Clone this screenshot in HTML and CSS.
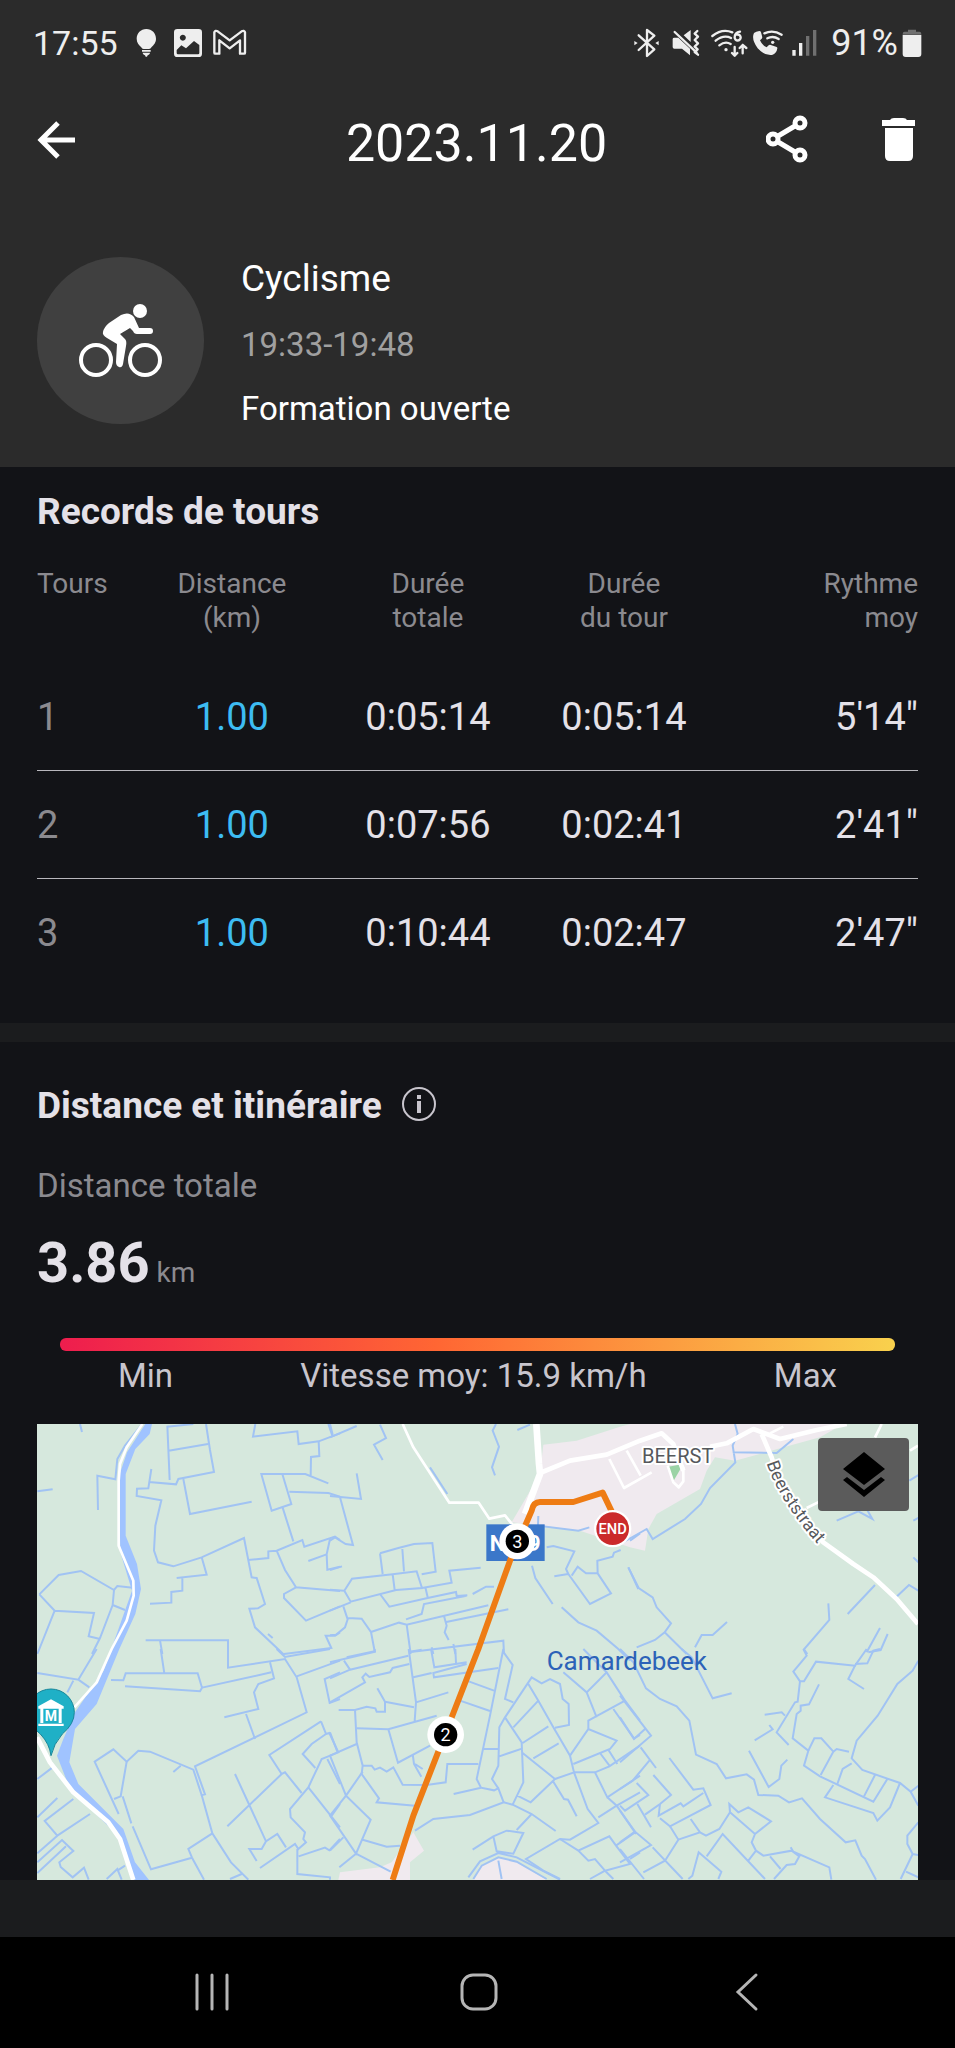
FILE: index.html
```
<!doctype html>
<html lang="fr">
<head>
    <meta charset="UTF-8">
    <meta name="viewport" content="width=device-width, initial-scale=1.0">
    <title>Cyclisme - 2023.11.20</title>
    <link rel="stylesheet" href="styles.css">
</head>
<body>
    <header class="top">
        <!-- Status bar -->
        <div class="status-bar">
            <div class="status-left">
                <span>17:55</span>
                <svg width="47" height="30" viewBox="354 84 141 90">
                    <path d="M439 87c-17 0-29 13-29 29 0 12 7 19 13 25 3 3 4 6 8 6h16c4 0 5-3 8-6 6-6 13-13 13-25 0-16-12-29-29-29zM426 150h26v5h-26zM428 158h22c0 5-5 7-7 8l-2 4h-4l-2-4c-2-1-7-3-7-8z"/>
                </svg>
                <svg width="43" height="30" viewBox="495 84 129 90">
                    <path fill-rule="evenodd" d="M532 87h64q10 0 10 10v64q0 10-10 10h-64q-10 0-10-10V97q0-10 10-10zM548 104a9 9 0 1 0 1 0zM530 150v9q0 4 4 4h60q4 0 4-4v-24l-16-12-24 22-14-9z"/>
                </svg>
                <svg width="40" height="30" viewBox="624 84 120 90">
                    <path class="outline" d="M643 97q3-7 10-3l36 27 36-27q7-4 10 3v61q0 3-3 3h-12v-40l-31 24-31-24v40h-12q-3 0-3-3z"/>
                </svg>
            </div>
            <div class="status-right">
                <svg width="34" height="30" viewBox="475 84 102 90">
                    <path class="outline" d="M492 106l47 42-22 20V90l22 17-47 43"/>
                    <path d="M479 123l10 6-10 7zM552 123l-10 6 10 7z"/>
                </svg>
                <svg width="40" height="30" viewBox="577 84 120 90">
                    <path d="M594 117q0-4 5-4h12l35 33v20l-24-20h-23q-5 0-5-5zM627 106l21-16v36z"/>
                    <path class="outline" d="M600 96l66 62M668 93l-8 8 10 9-10 10 10 10-10 10 9 8-9 8 10 8"/>
                </svg>
                <svg width="44" height="30" viewBox="697 84 132 90">
                    <path class="outline" d="M713 108q30-24 60-11M723 122q24-19 46-8M734 136q18-14 34-4M796 95q-16 3-16 17a9 9 0 1 0 6-8M780 141v26l-8-8m8 8l8-8M804 160v-25l-9 9m9-9l11 9"/>
                    <circle cx="754" cy="149" r="5"/>
                </svg>
                <svg width="36" height="30" viewBox="829 84 108 90">
                    <path d="M845 95l9-2q4 0 5 4l4 15q0 4-7 9 6 15 20 21 6-9 10-8l18 6q5 1 4 5-2 16-16 20-22 3-43-20-20-28-11-46z"/>
                    <path class="outline" d="M869 100q26-12 52 4M878 115q17-9 34 2"/>
                    <circle cx="894" cy="127" r="5"/>
                </svg>
                <svg width="44" height="30" viewBox="937 84 132 90">
                    <path d="M953 150h10v17h-10zM973 129h10v38h-10z"/>
                    <path class="faint" d="M994 108h10v59h-10zM1015 90h10v77h-10z"/>
                </svg>
                <span class="battery-level">91%</span>
                <svg width="24" height="30" viewBox="1272 84 72 90">
                    <path class="faint" d="M1302 89h24v6h10q6 0 6 7h-56q0-7 6-7h10z"/>
                    <path d="M1286 104h56v58q0 9-9 9h-38q-9 0-9-9z"/>
                </svg>
            </div>
        </div>

        <!-- App bar -->
        <div class="app-bar">
            <button class="icon-btn" aria-label="Retour">
                <svg width="38" height="60" viewBox="0 0 38 60">
                    <path class="line" d="M38 26H4M21 9L4 26l17 17"/>
                </svg>
            </button>
            <h1>2023.11.20</h1>
            <div class="actions">
                <button class="icon-btn" aria-label="Partager">
                    <svg width="42" height="60" viewBox="0 0 42 60">
                        <path class="line" d="M34 9L7 25l27 16"/>
                        <g class="ring">
                            <circle cx="34" cy="9" r="5"/>
                            <circle cx="7" cy="25" r="5"/>
                            <circle cx="34" cy="41" r="5"/>
                        </g>
                    </svg>
                </button>
                <button class="icon-btn" aria-label="Supprimer">
                    <svg width="34" height="60" viewBox="0 0 34 60">
                        <path d="M0 6h8q1-2 4-2h9q3 0 4 2h8v6H0zM3 14h28v28q0 5-5 5H8q-5 0-5-5z"/>
                    </svg>
                </button>
            </div>
        </div>

        <div class="activity">
            <div class="avatar">
                <svg width="84" height="80" viewBox="0 0 84 80">
                    <circle class="wheel" cx="17" cy="59" r="15"/>
                    <circle class="wheel" cx="66" cy="59" r="15"/>
                    <circle cx="61" cy="10" r="7"/>
                    <path d="M24 31q1-5 6-9l12-8q8-4 13 2l5 11h11q3 0 3 3t-3 3H58q-3 0-4-3l-3-3-10 6 5 5q2 2 1 7l-3 18q-1 4-4 3t-3-5l1-18-10-6q-5-3-4-6z"/>
                </svg>
            </div>
            <div class="activity-text">
                <p class="sport">Cyclisme</p>
                <p class="hours">19:33-19:48</p>
                <p>Formation ouverte</p>
            </div>
        </div>
    </header>

    <main>
        <section class="laps">
            <h2>Records de tours</h2>
            <table>
                <thead>
                    <tr>
                        <th>Tours</th>
                        <th>Distance<br>(km)</th>
                        <th>Durée<br>totale</th>
                        <th>Durée<br>du tour</th>
                        <th>Rythme<br>moy</th>
                    </tr>
                </thead>
                <tbody>
                    <tr><td>1</td><td>1.00</td><td>0:05:14</td><td>0:05:14</td><td>5'14"</td></tr>
                    <tr><td>2</td><td>1.00</td><td>0:07:56</td><td>0:02:41</td><td>2'41"</td></tr>
                    <tr><td>3</td><td>1.00</td><td>0:10:44</td><td>0:02:47</td><td>2'47"</td></tr>
                </tbody>
            </table>
        </section>

        <section class="route">
            <div class="route-title">
                <h2>Distance et itinéraire</h2>
                <button class="icon-btn" aria-label="Informations">
                    <svg width="36" height="44" viewBox="0 0 36 44">
                        <circle class="info-ring" cx="18" cy="20" r="16"/>
                        <path class="info-mark" d="M16 11h4v4h-4zM16 17h4v12h-4z"/>
                    </svg>
                </button>
            </div>
            <p class="label">Distance totale</p>
            <p class="total"><strong>3.86</strong> km</p>

            <div class="speed">
                <div class="speed-bar"></div>
                <div class="speed-labels">
                    <span>Min</span>
                    <span>Vitesse moy: 15.9 km/h</span>
                    <span>Max</span>
                </div>
            </div>

            <!-- Map -->
            <div class="map">
                <svg class="map-drawing" viewBox="0 0 2643 1368" role="img" aria-label="Itinéraire">
                    <rect class="land" width="2643" height="1368"/>

                    <!-- Built-up areas -->
                    <g class="town">
                        <path d="M1519 62L1619 50L1749 8L1780 0H2419L2349 40L2149 95L2094 110L2034 100L2009 140L1989 195L1859 270L1834 315L1824 380L1779 370L1629 320L1519 305L1424 295L1509 150z"/>
                        <path d="M909 1345L1029 1330L1064 1315L1129 1225L1161 1280L1119 1315V1368H904z"/>
                        <path d="M1309 1368L1329 1325L1384 1300L1439 1315L1529 1368z"/>
                    </g>
                    <path class="park" d="M1894 128L1939 120L1909 172z"/>

                    <!-- Ditches -->
                    <g class="canal" transform="translate(-21 -30)">
                        <path d="M150 30L156 54M22 232L68 226M204 288L202 185L256 196L262 135L285 95L335 32"/>
                        <path d="M412 38L490 30M412 35L419 198M416 110L534 90M528 30L540 108L552 174L445 195L438 211L357 204M364 165L355 223L321 224L320 246L394 259L376 335L372 410L384 445L430 457L515 430L642 372L665 490L680 492L705 570L684 583L658 584L675 640L762 722"/>
                        <path d="M460 195L480 300L665 263M515 430L530 482L440 492M457 492V530L424 534V566L360 569"/>
                        <path d="M676 30L669 68L802 52L806 90L866 82L930 58M895 30L908 68M866 82L868 126L843 129L842 188M895 208L826 180H694L725 290L784 270L757 180M778 233L895 237L930 248"/>
                        <path d="M757 278L790 382M654 438L715 432V412L740 410L817 378L823 398L915 368L930 378M740 410L765 468L798 520L930 531M798 520L762 540V552L828 620L930 577M835 441L890 421L900 375M890 421L892 467L930 458"/>
                        <path d="M28 541L86 483L153 471L252 528L262 516L315 522M252 528L248 573L285 588M248 573L210 672L186 720M28 541L74 590L192 597L176 667L210 675M74 590L22 720"/>
                        <path d="M347 679H594V722M390 679L397 720M930 655L915 665L887 665L904 702L762 720M714 660L728 672"/>
                    </g>
                    <g class="canal" transform="translate(879 -30)">
                        <path d="M0 70L80 36M0 30L8 62M150 32L168 72L132 92L158 138M498 30L488 50L507 98L486 160L495 184M562 48L600 32M80 178L93 255L0 246M30 250L69 393L47 390L15 370L0 380M0 468L36 457"/>
                        <path d="M150 418L205 402L252 390L307 387L317 473L275 481M150 418L158 480M217 405L222 472M0 527L43 530L66 494L188 481L260 472L276 522L198 528L62 563L43 530M188 481L194 528M276 522L365 506L358 470L452 461M286 520L293 550M0 590L62 565"/>
                        <path d="M150 540L178 578L293 552L378 534L380 546L412 544M428 540L468 518L492 518M40 577L53 616L45 640L18 662L0 664M53 612L95 614L123 654L207 626L230 632L475 574M228 616L275 600L282 570L410 545M123 654L134 712L50 730M230 632L242 720M535 586L345 625M342 606L350 635L344 655L356 678M242 714L520 680L522 720M305 700L310 720M370 690L376 720"/>
                        <path d="M625 306L624 335L745 350L778 340M300 160L352 240M650 400L670 396L733 412L708 465L715 480L673 487M715 480L780 570L843 538L803 478L768 478L743 458L725 485M803 478L802 440L848 428L852 416L872 408M895 460L925 525M900 380L930 358"/>
                        <path d="M606 455L616 492L668 570M695 580L745 625L800 650L865 705L900 740"/>
                    </g>
                    <g class="canal" transform="translate(1749 -30)">
                        <path d="M345 30L353 60L338 95L346 145L270 222L243 270L195 315L98 375L80 345L0 390M338 115L470 117L520 75M650 320L715 292L757 315L740 285M868 200L895 183M880 430L895 445M880 320L895 312"/>
                        <path d="M25 460L56 522L98 550L110 580L153 628L134 655L105 678L50 700M134 655L200 720M225 700L245 663L278 663L321 624M625 568L628 618L552 706L562 720M683 600L765 513M828 550L867 513L895 530M780 642L740 715M803 660L782 708L745 715"/>
                    </g>
                    <g class="canal" transform="translate(-21 675)">
                        <path d="M200 0L145 92L22 72M145 92L178 115M130 95L112 130M243 93L280 94L287 73H503L516 116L724 70M285 112L510 127L516 116M392 0L403 73M594 0V56L765 30L800 85L830 190L495 352L525 436L515 438L490 362L360 308L325 305L290 338L250 301L194 338L266 495M430 369L452 350"/>
                        <path d="M290 338L272 442L252 450M278 442L304 523M308 532L363 661L486 626L522 692M515 438L547 553L603 640L655 692M547 553L475 600L486 626M600 690L635 675"/>
                        <path d="M740 0L765 24L900 0M720 40L732 88L685 105L672 130L685 180L583 205M648 195L675 270M800 82L930 35M930 70L884 90L899 162L930 150M873 217L718 318L755 375L765 370L815 432M873 217L888 255L845 285L818 315L856 357M888 255L898 252L925 310L875 330L835 415L780 480L782 505L825 550L820 570L828 580L805 600L795 585L690 657"/>
                        <path d="M755 375L592 532M615 375L658 468L708 577L742 555L768 595M708 577L695 600L658 600L680 636M835 415L930 535M892 330L930 405M905 500L930 465M802 600V675L900 685V692M806 622L885 596L898 604L930 570"/>
                        <path d="M22 390L68 355M22 505L82 447M130 450L44 516L82 560L180 495M82 560L22 613M22 640L96 573L130 606L88 640L92 654L128 685L162 656L176 692M22 672L108 592M230 690L262 660L275 692M262 665L285 650"/>
                    </g>
                    <g class="canal" transform="translate(879 675)">
                        <path d="M0 40L135 8L134 0M0 88L60 62L235 20M42 35L60 62M0 160L105 100L97 85L107 74L118 84L180 70L188 57L238 45M26 183H75L110 173L136 178L140 188H165V158L142 118M165 158L252 175M75 183L80 280L98 350L95 375L147 448L140 460L255 470"/>
                        <path d="M236 0L258 160L254 216M240 8L275 2M250 85L305 72M303 0L313 55L410 40M376 0L378 42M410 45L310 72L312 85L505 57M258 160L355 130M410 95L492 125M390 155L480 186M80 238L175 241L320 200M175 241L204 341L300 290M248 315L252 345L274 383M255 345L278 360"/>
                        <path d="M0 320L80 285M0 250L22 308M98 350H125L134 362L150 356L170 368L190 355L218 407L290 408L347 400L352 345H445M520 0L480 200L440 390L453 416L492 424L505 418L521 460M371 435L453 416M521 10L548 48L525 150L550 160M458 300H505"/>
                        <path d="M0 320L48 440L122 512L78 614L0 500L48 440L98 368M78 614L182 668M98 572L170 593L210 590M0 605L40 565M28 655L78 614M255 545L310 510L420 498L521 460L548 467L605 495L677 546M605 495L560 543M428 602L490 562L530 545L580 552L550 614L500 607L490 562M415 685L450 637L505 612L560 625L690 692M430 690L455 650L505 625L560 638L650 690M505 635L515 690"/>
                        <path d="M525 205L508 235L505 350L486 390L505 418M525 205L605 85L635 103L660 90L690 105L698 150L716 165L717 228L675 236M525 205L575 280L580 400L548 467M595 105L625 155L670 235L720 320L732 370L675 390L575 310M550 235L625 155M578 282L655 232M610 328L686 283M508 322L578 298M675 390L602 460L562 440M670 398L702 450L714 452L740 502"/>
                        <path d="M732 370L773 480L805 522L720 572L690 570L588 630L640 665L690 690M732 370H795L838 352L930 290M720 320L775 240L860 275L840 300L730 345M700 70L770 130L830 70L885 155L775 215V240M770 130L800 205M850 180L912 268L930 258M830 70L760 0M885 155L930 215M810 312L840 352M835 302L862 345"/>
                        <path d="M795 370L832 445L930 380M832 445L860 470L805 505M860 470L918 555M860 470L930 430M918 548L858 590L838 562L745 605L775 635L795 630L825 665L780 690M858 590L900 645L825 665L850 690M900 630L930 610M690 570L745 605"/>
                    </g>
                    <g class="canal" transform="translate(1749 675)">
                        <path d="M0 0L40 40L78 118L120 150L170 172L208 215L228 317L290 345L318 388L380 376L402 392L415 438L475 440L507 460L546 448L600 510L677 580L706 574L725 620L735 630L768 692"/>
                        <path d="M185 0L215 25L278 148L335 133M0 140L93 260L0 340M0 205L42 270L75 240M62 295L108 357M88 335L38 395L0 420M50 402L85 438L15 485L0 470M52 465L93 535M75 497L120 465L153 438L100 378M120 465L116 500L182 463L190 472L250 432M148 327L220 422L250 418L272 468L150 532L120 508"/>
                        <path d="M150 532L175 572L240 550L258 560L298 540L330 490L328 465L355 490L385 475L453 517L405 555L330 490M212 510L240 550M0 485L45 548L93 588L0 640M45 548L0 580M0 600L72 690M98 595L188 690M175 572L135 635L70 670M205 690L217 680L236 610L304 668L295 690M260 622L308 555L435 690M405 555L395 580L408 605L385 635M408 605L430 620L515 605L538 622L525 645L500 648L462 690M450 622L482 660M512 595L520 608L628 655L634 692"/>
                        <path d="M550 0L560 20L520 68L540 97L533 158L525 160L470 250L506 288M540 97H552L588 38L705 50L740 0M434 197L485 190L495 200M404 274L458 241L448 228M387 305L446 414L478 390L484 350L502 332M597 106L567 166L542 170V185L530 195L518 268L565 305L552 350L600 382L760 458L802 390"/>
                        <path d="M565 305L583 268H604L640 308L602 378M640 308L650 300L687 308M652 405L668 360L695 343M895 35L878 65L832 105L773 200L710 275L695 328L727 363L840 402L872 428L895 470M872 428L895 410M765 378L732 442M640 408L615 445L760 492L772 515L810 475L840 402M705 50L685 90L732 120M705 45L742 43L760 5L780 0M895 520L862 560V585L878 615L895 618M878 615L842 690M858 668L895 685"/>
                    </g>

                    <!-- River and roads -->
                    <path class="river" d="M325 0H345L338 30L295 75L266 150V335L300 420L312 495L295 570L247 675L179 840L114 915L97 1015L124 1080L259 1215L294 1315L336 1368H289L244 1235L99 1095L60 995L79 945L114 865L200 740L285 500L250 385L245 160L270 85z"/>
                    <g class="road">
                        <path class="w8" d="M316 0L269 70L249 120L245 170V365L289 470L290 515L269 590L224 675L179 775L112 850"/>
                        <path class="w14" d="M0 940L39 1015L109 1105L214 1195L249 1245L289 1368"/>
                        <path class="w8" d="M1097 0L1129 70L1237 236H1325L1357 284L1404 274L1429 305"/>
                        <path class="w20" d="M1498 0L1506 120L1509 150L1464 270"/>
                        <path class="w14" d="M1509 147L1599 110L1709 92L1809 50L1874 28L1909 60L1939 140"/>
                        <path class="w8" d="M1939 130L1939 172L1925 190L1909 175L1892 125M1717 105L1761 192L1844 145M1769 80L1811 155"/>
                        <path class="w14" d="M2019 68L2069 58L2149 15L2229 45L2339 18L2429 0"/>
                        <path class="w14" d="M2174 30L2204 100L2239 210L2289 280L2359 355L2449 420L2509 460L2579 525L2643 600"/>
                        <path class="w8" d="M2199 28L2239 8M2514 40L2534 0M2619 80L2643 65M2309 252L2349 232"/>
                    </g>

                    <!-- Places -->
                    <text class="place" x="1815" y="118">BEERST</text>
                    <text class="water-name" x="1529" y="738">Camardebeek</text>
                    <path id="street" class="hidden-path" d="M2189 118Q2225 232 2362 384"/>
                    <text class="street-name"><textPath href="#street">Beerststraat</textPath></text>

                    <!-- Museum pin -->
                    <path class="pin" d="M42 995Q38 960 10 930Q-28 900-28 865A70 70 0 0 1 112 865Q112 900 76 930Q50 960 42 995z"/>
                    <path class="pin-icon" d="M42 826L80 847V854H4V847zM10 854H19V897H10zM65 854H74V897H65zM4 899H80V906H4z"/>
                    <text class="pin-letter" x="42" y="891">M</text>

                    <!-- Track -->
                    <rect class="road-badge" x="1348" y="301" width="175" height="110"/>
                    <text class="road-number" x="1358" y="382">N</text>
                    <text class="road-number" x="1473" y="382">9</text>
                    <path class="track" d="M1067 1368L1129 1175L1324 675L1419 410L1484 260Q1489 234 1509 234H1609L1697 206L1724 262"/>
                    <g class="marker">
                        <circle class="ring-white" cx="1441" cy="352" r="54"/>
                        <circle cx="1441" cy="352" r="35"/>
                        <text x="1441" y="371">3</text>
                        <circle class="ring-white" cx="1226" cy="932" r="55"/>
                        <circle cx="1226" cy="932" r="35"/>
                        <text x="1226" y="951">2</text>
                        <circle class="ring-white" cx="1727" cy="314" r="56"/>
                        <circle class="end" cx="1727" cy="314" r="49"/>
                        <text class="end-text" x="1727" y="331">END</text>
                    </g>
                </svg>
                <button class="layers-btn" aria-label="Calques">
                    <svg width="42" height="46" viewBox="0 0 42 46">
                        <path d="M21 0l21 17-21 16L0 17zM4 25l17 13 17-13 4 3-21 17L0 28z"/>
                    </svg>
                </button>
            </div>
        </section>
    </main>

    <!-- Android navigation -->
    <nav class="nav-bar">
        <button class="icon-btn" aria-label="Applications récentes">
            <svg width="40" height="40" viewBox="0 0 40 40"><path d="M5 3v34M20 3v34M35 3v34"/></svg>
        </button>
        <button class="icon-btn" aria-label="Accueil">
            <svg width="40" height="40" viewBox="0 0 40 40"><rect x="4" y="3" width="34" height="34" rx="11"/></svg>
        </button>
        <button class="icon-btn" aria-label="Précédent">
            <svg width="40" height="40" viewBox="0 0 40 40"><path d="M33 3L15 20l18 17"/></svg>
        </button>
    </nav>
</body>
</html>
```
FILE: styles.css
```
* {
    box-sizing: border-box;
}

body {
    margin: 0;
    min-height: 100vh;
    display: flex;
    flex-direction: column;
    font-family: Roboto, "Liberation Sans", sans-serif;
    font-size: 33px;
    line-height: 40px;
    color: #e4e1e8;
    background: #1b1c1e;
}

h1, h2, p {
    margin: 0;
}

svg {
    display: block;
    fill: currentColor;
}

.icon-btn {
    padding: 0;
    border: none;
    background: none;
    color: inherit;
    cursor: pointer;
}

/* Header */
.top {
    background: #2b2b2b;
    color: #fff;
}

.status-bar {
    display: flex;
    justify-content: space-between;
    padding: 23px 33px;
    font-size: 34px;
    color: #eee;
}

.status-left,
.status-right {
    display: flex;
    align-items: center;
}

.battery-level {
    font-size: 36px;
}

.outline {
    fill: none;
    stroke: currentColor;
    stroke-width: 7;
    stroke-linecap: round;
    stroke-linejoin: round;
}

.faint {
    fill: #707070;
}

.app-bar {
    display: grid;
    grid-template-columns: 1fr auto 1fr;
    align-items: center;
    padding: 28px 39px 83px 37px;
}

.app-bar h1 {
    font-size: 52px;
    font-weight: 400;
    line-height: 60px;
}

.app-bar > .icon-btn {
    justify-self: start;
}

.actions {
    display: flex;
    justify-content: flex-end;
    gap: 74px;
}

.line {
    fill: none;
    stroke: currentColor;
    stroke-width: 5;
}

.ring {
    fill: #2b2b2b;
    stroke: currentColor;
    stroke-width: 5;
}

.activity {
    display: flex;
    gap: 37px;
    padding: 0 37px 38px;
}

.avatar {
    display: flex;
    align-items: center;
    justify-content: center;
    width: 167px;
    height: 167px;
    border-radius: 50%;
    background: #404040;
}

.wheel {
    fill: none;
    stroke: currentColor;
    stroke-width: 4;
}

.activity-text {
    display: flex;
    flex-direction: column;
    gap: 24px;
}

.sport {
    font-size: 37px;
    line-height: 44px;
}

.hours {
    color: #a0a0a0;
}

/* Laps */
.laps,
.route {
    background: #121317;
    padding: 0 37px;
}

.laps {
    padding-top: 23px;
    padding-bottom: 37px;
    margin-bottom: 19px;
}

h2 {
    font-size: 37px;
    line-height: 44px;
    font-weight: 700;
}

table {
    width: 100%;
    margin-top: 33px;
    table-layout: fixed;
    border-collapse: collapse;
    text-align: center;
}

th {
    padding: 0 0 27px;
    font-size: 28px;
    line-height: 34px;
    font-weight: 400;
    vertical-align: top;
    color: #8b8a8f;
}

td {
    height: 108px;
    padding: 2px 0 0;
    font-size: 38px;
    line-height: 44px;
}

tbody tr + tr {
    border-top: 1px solid #b9b8bd;
}

th:first-child {
    width: 11%;
}

th:first-child,
td:first-child {
    text-align: left;
}

th:last-child,
td:last-child {
    text-align: right;
}

td:first-child {
    color: #8b8a8f;
}

td:nth-child(2) {
    color: #3dbcf2;
}

/* Distance and route */
.route {
    padding-top: 42px;
}

.route-title {
    display: flex;
    gap: 19px;
}

.info-ring {
    fill: none;
    stroke: #c8c5cd;
    stroke-width: 2;
}

.info-mark {
    fill: #c8c5cd;
}

.label {
    margin-top: 38px;
    color: #8b8a8f;
}

.total {
    margin-top: 25px;
    font-size: 28px;
    line-height: 64px;
    color: #8b8a8f;
}

.total strong {
    font-size: 56px;
    color: #e4e1e8;
}

.speed {
    margin: 33px 23px 28px;
}

.speed-bar {
    height: 13px;
    border-radius: 6px;
    background: linear-gradient(to right, #ee1d4e, #ff6633 45%, #f9d14d);
}

.speed-labels {
    display: flex;
    justify-content: space-between;
    padding: 5px 58px 0;
    color: #c8c5cd;
}

/* Map */
.map {
    position: relative;
}

.map-drawing {
    width: 100%;
    height: auto;
}

.land {
    fill: #d6e8dd;
}

.town {
    fill: #f0eaef;
}

.park {
    fill: #9bd3a5;
}

.canal {
    fill: none;
    stroke: #a1c3f3;
    stroke-width: 6;
}

.river {
    fill: #a0c3ff;
}

.road {
    fill: none;
    stroke: #fff;
    stroke-linejoin: round;
}

.w8 { stroke-width: 8; }
.w14 { stroke-width: 14; }
.w20 { stroke-width: 20; }

.hidden-path {
    fill: none;
}

.place,
.street-name {
    fill: #56585c;
    stroke: #fff;
    stroke-width: 12;
    stroke-linejoin: round;
    paint-order: stroke;
}

.place {
    font-size: 60px;
}

.street-name {
    font-size: 53px;
}

.water-name {
    font-size: 78px;
    fill: #2c62b8;
}

.pin {
    fill: #1fb0c6;
    stroke: #16869a;
    stroke-width: 3;
}

.pin-icon {
    fill: #fff;
}

.pin-letter {
    font-size: 42px;
    font-weight: 700;
    fill: #fff;
    text-anchor: middle;
}

.road-badge {
    fill: #3b77c9;
}

.road-number {
    font-size: 66px;
    font-weight: 700;
    fill: #fff;
}

.track {
    fill: none;
    stroke: #ee7c14;
    stroke-width: 18;
    stroke-linejoin: round;
}

.marker {
    fill: #000;
    text-anchor: middle;
}

.marker text {
    font-size: 54px;
    fill: #fff;
}

.marker .ring-white {
    fill: #fff;
}

.marker .end {
    fill: #cb2a2b;
}

.marker .end-text {
    font-size: 44px;
    font-weight: 500;
}

.layers-btn {
    position: absolute;
    top: 14px;
    right: 9px;
    display: flex;
    align-items: center;
    justify-content: center;
    width: 91px;
    height: 73px;
    padding: 0;
    border: none;
    border-radius: 4px;
    background: #5b5b5b;
    color: #000;
    cursor: pointer;
}

/* Navigation bar */
.nav-bar {
    display: flex;
    margin-top: auto;
    padding: 35px 79px 36px;
    background: #000;
    color: #b5b5b5;
}

.nav-bar .icon-btn {
    flex: 1;
    display: flex;
    justify-content: center;
}

.nav-bar svg {
    fill: none;
    stroke: currentColor;
    stroke-width: 3;
    stroke-linecap: round;
}
```
